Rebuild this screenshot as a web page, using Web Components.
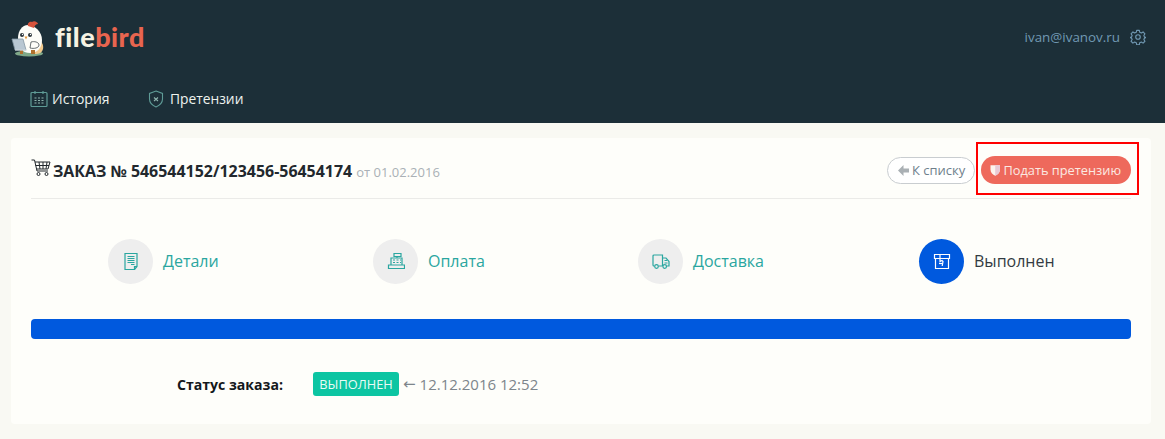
<!DOCTYPE html>
<html lang="ru">
<head>
<meta charset="utf-8">
<title>Заказ</title>
<style>
html,body{margin:0;padding:0;background:#f9f9f3;font-family:"Open Sans","Noto Sans",sans-serif;}
</style>
</head>
<body>
<app-header email="ivan@ivanov.ru"></app-header>
<order-card number="546544152/123456-56454174" date="01.02.2016">
  <order-step label="Детали" icon="doc"></order-step>
  <order-step label="Оплата" icon="till"></order-step>
  <order-step label="Доставка" icon="truck"></order-step>
  <order-step label="Выполнен" icon="box" active></order-step>
</order-card>

<script>
// Site header with logo, user and nav
const headerTpl = document.createElement('template');
headerTpl.innerHTML = `
<style>
:host{display:block;height:123px;background:#1c2f38;box-sizing:border-box;}
.top{display:flex;align-items:center;justify-content:space-between;height:76px;padding:0 19px 0 10px;}
.logo{display:flex;align-items:center;gap:9px;}
.word{font:900 27px/30px Lato,"Open Sans",sans-serif;letter-spacing:.5px;color:#f6f3e3;margin-top:-2px;}
.word b{color:#e8654f;font-weight:900;}
.user{display:flex;align-items:center;gap:10px;color:#7199b3;font-size:13.4px;margin-top:-3px;}
nav{display:flex;padding:13px 0 0 30px;}
nav a{display:flex;align-items:center;gap:4px;color:#eef3ee;font-size:13.8px;line-height:20px;}
nav a:first-child{width:118px;font-size:14px;}
</style>
<div class="top">
  <div class="logo">
    <svg width="36" height="40" viewBox="0 0 36 40">
      <ellipse cx="19" cy="35.500" rx="14" ry="3" fill="#7fa888"/>
      <path d="M26 21c5 1 8 5 7 10-1 4-4 5-8 5z" fill="#f1c98c"/>
      <path d="M18 7c-6 0-10 6-10 13 0 9 4 15 12 15 8 0 12-6 12-13 0-8-7-15-14-15z" fill="#fdfdf8"/>
      <path d="M18 8c-1-3 2-5 4-4 2-2 6 0 6 2-2 0-3 1-4 4z" fill="#d6533c"/>
      <circle cx="12" cy="17" r="2" fill="#2b3438"/>
      <circle cx="20" cy="17" r="2" fill="#2b3438"/>
      <circle cx="12.500" cy="16.500" r=".7" fill="#fff"/>
      <circle cx="20.500" cy="16.500" r=".7" fill="#fff"/>
      <path d="M14.500 18.500h3l-1.500 3z" fill="#e39a3d"/>
      <path d="M10 32h3v4h-3zM21 32h4v4h-4z" fill="#b0712d"/>
      <path d="M2 21h11l3 11H5z" fill="#b8c7d2" stroke="#8497a3" stroke-width=".8"/>
      <path d="M5 32h12" stroke="#dfe6ea" stroke-width="1"/>
      <path d="M21 24c3-1 8 0 8 3 0 3-5 4-9 3z" fill="#fdfdf8" stroke="#2b3438" stroke-width=".7"/>
    </svg>
    <span class="word">file<b>bird</b></span>
  </div>
  <div class="user">
    <span id="email"></span>
    <svg width="16" height="16" viewBox="0 0 24 24" fill="none" stroke="#7199b3" stroke-width="1.700" stroke-linejoin="round">
      <circle cx="12" cy="12" r="3.400"/>
      <path d="M10 2h4l.6 3 2.400 1 2.600-1.600 2.800 2.800-1.600 2.600 1 2.400 3 .6v0l-3 .6-1 2.400 1.600 2.600-2.800 2.800-2.600-1.600-2.400 1-.6 3h-4l-.6-3-2.400-1-2.600 1.600-2.800-2.800 1.600-2.600-1-2.400-3-.6v-0l3-.6 1-2.400-1.600-2.600 2.800-2.800 2.600 1.600 2.400-1z"/>
    </svg>
  </div>
</div>
<nav>
  <a>
    <svg width="18" height="18" viewBox="0 0 18 18" fill="none" stroke="#5f9c97" stroke-width="1.200">
      <rect x="1" y="2.500" width="16" height="14" rx="1"/>
      <path d="M5 1v3M13 1v3"/>
      <path d="M4.500 8h2M8 8h2M11.500 8h2M4.500 10.500h2M8 10.500h2M11.500 10.500h2M4.500 13h2M8 13h2M11.500 13h2" stroke="#8fb5ae"/>
    </svg>
    История
  </a>
  <a>
    <svg width="16" height="18" viewBox="0 0 16 18" fill="none" stroke="#5f9c97" stroke-width="1.100" style="margin-right:2px">
      <path d="M8 1l6.500 2.500V9c0 4-3 6.500-6.500 8C4.500 15.500 1.500 13 1.500 9V3.500z"/>
      <path d="M6 7.500l4 3.500M10 7.500l-4 3.500" stroke="#8fb5ae"/>
    </svg>
    Претензии
  </a>
</nav>`;
class AppHeader extends HTMLElement {
  constructor() {
    super();
    this.attachShadow({ mode: 'open' });
    this.shadowRoot.appendChild(headerTpl.content.cloneNode(true));
    this.shadowRoot.querySelector('#email').textContent = this.getAttribute('email');
  }
}
customElements.define('app-header', AppHeader);

// One step of the order progress
const stepIcons = {
  doc: `<path d="M3 .5h12v13l-2.500 3H3z"/><path d="M5.500 3.500h7M5.500 5.500h7M5.500 7.500h7M5.500 9.500h7M9 11.500h3.500"/><path d="M15 13.500h-2.500v3"/>`,
  till: `<path d="M7 .5h7v3H7zM4 5h11v7H4zM1.500 12h16v3.500h-16z"/><path d="M10 3.500V5M6 7h2M9.500 7h2M13 7h1M6 9.500h2M9.500 9.500h2M13 9.500h1" />`,
  truck: `<path d="M10.500 13H6.500M2.500 13H2a1 1 0 0 1-1-1V3a1 1 0 0 1 1-1h8.500v11"/><path d="M10.500 5H14l3 3.500V13h-2.500"/><circle cx="4.500" cy="13.500" r="1.800"/><circle cx="12.700" cy="13.500" r="1.800"/><path d="M12.500 7.500h2.500M12.500 10h3"/>`,
  box: `<path d="M1.500 1.500h15v4h-15zM2.500 5.500v10h13v-10"/><path d="M7 1.500v7l2-1 1 1-.8 4.500"/><path d="M6 10.500h3"/>`
};
const stepTpl = document.createElement('template');
stepTpl.innerHTML = `
<style>
:host{display:flex;align-items:center;gap:10px;color:#2aa6a0;font-size:16px;}
.dot{width:45px;height:45px;border-radius:50%;background:#eeeeee;display:flex;align-items:center;justify-content:center;}
svg{fill:none;stroke:#2aa6a0;stroke-width:1.200;}
#label{margin-top:-2px;}
:host([active]){color:#333b42;}
:host([active]) .dot{background:#0059de;}
:host([active]) svg{stroke:#ffffff;}
</style>
<div class="dot"><svg width="18" height="17" viewBox="0 0 18 17"></svg></div>
<span id="label"></span>`;
class OrderStep extends HTMLElement {
  constructor() {
    super();
    this.attachShadow({ mode: 'open' });
    this.shadowRoot.appendChild(stepTpl.content.cloneNode(true));
    this.shadowRoot.querySelector('#label').textContent = this.getAttribute('label');
    this.shadowRoot.querySelector('svg').innerHTML = stepIcons[this.getAttribute('icon')];
  }
}
customElements.define('order-step', OrderStep);

// Pill buttons in the title row
const btnTpl = document.createElement('template');
btnTpl.innerHTML = `
<style>
:host{display:inline-flex;align-items:center;box-sizing:border-box;height:28px;border-radius:14px;font-size:12.800px;white-space:nowrap;}
:host([kind=plain]){height:27px;width:88px;padding:0 8px 0 10px;gap:3px;background:#fff;border:1px solid #c9cdd0;color:#6f7f8c;font-size:13px;}
:host([kind=danger]){width:150px;padding:0 10px 0 9px;gap:3px;background:#ee695c;color:#fbe9e2;}
</style>
<slot name="icon"></slot><slot></slot>`;
class PillButton extends HTMLElement {
  constructor() {
    super();
    this.attachShadow({ mode: 'open' });
    this.shadowRoot.appendChild(btnTpl.content.cloneNode(true));
  }
}
customElements.define('pill-button', PillButton);

// Main card
const cardTpl = document.createElement('template');
cardTpl.innerHTML = `
<style>
:host{display:block;box-sizing:border-box;margin:15px 14px 0 11px;height:286px;padding:0 20px;background:#fefefa;border-radius:4px;position:relative;}
.head{display:flex;align-items:center;justify-content:space-between;height:60px;border-bottom:1px solid #ebebe8;}
h1{display:flex;align-items:center;margin:0;font-size:15.950px;font-weight:700;color:#22282d;line-height:22px;padding-top:5px;}
h1 svg{margin:-6px 2px 0 0;}
h1 small{font-size:13px;font-weight:400;color:#aab1b6;margin:2px 0 0 4px;}
.btns{display:flex;align-items:center;gap:6px;padding-top:4px;}
.mark{position:absolute;left:965px;top:4px;width:163px;height:53px;box-sizing:border-box;border:2px solid #ff0000;}
.steps{display:grid;grid-template-columns:265px 265px 281px 1fr;padding:40px 0 0 77px;}
.bar{height:20px;margin-top:35px;background:#0059de;border-radius:4px;}
.status{display:flex;align-items:center;margin-top:33px;padding-left:146px;font-size:15px;color:#7d858b;}
.status b{width:136px;color:#14181b;font-weight:700;font-size:14.100px;}
.tag{background:#0cc5a2;color:#eafbf6;border-radius:3px;height:24px;line-height:24px;width:86px;box-sizing:border-box;text-align:center;font-size:12.800px;margin-right:4px;}
.arrow{font-family:"DejaVu Sans",sans-serif;margin-right:4px;}
</style>
<div class="head">
  <h1>
    <svg width="20" height="18" viewBox="0 0 20 18" fill="none" stroke="#22282d" stroke-width="1">
      <path d="M.5 1h3l2.500 11h11"/>
      <path d="M4 3h15l-2 7H5.600"/>
      <path d="M8 3l1 7M12 3v7M16 3l-1 7M4.500 6.500h13.500"/>
      <circle cx="7.500" cy="15" r="1.500"/><circle cx="15.500" cy="15" r="1.500"/>
    </svg>
    ЗАКАЗ № <span id="num" style="margin-left:4px"></span><small>от <span id="date"></span></small>
  </h1>
  <div class="btns">
    <pill-button kind="plain">
      <svg slot="icon" width="11" height="11" viewBox="0 0 11 11"><path d="M5.500 0v3.500H11v4H5.500V11L0 5.500z" fill="#aab0b4"/></svg>
      К списку
    </pill-button>
    <pill-button kind="danger">
      <svg slot="icon" width="11" height="12" viewBox="0 0 11 12"><path d="M.5 1h10v4.500C10.500 9 8 11 5.500 12 3 11 .5 9 .5 5.500z" fill="#fdf3ee"/><path d="M5.500 1h5v4.500C10.500 9 8 11 5.500 12z" fill="#e9c9d6"/></svg>
      Подать претензию
    </pill-button>
  </div>
</div>
<div class="mark"></div>
<div class="steps"><slot></slot></div>
<div class="bar"></div>
<div class="status"><b>Статус заказа:</b><span class="tag">ВЫПОЛНЕН</span><span class="arrow">←</span>12.12.2016 12:52</div>`;
class OrderCard extends HTMLElement {
  constructor() {
    super();
    this.attachShadow({ mode: 'open' });
    this.shadowRoot.appendChild(cardTpl.content.cloneNode(true));
    this.shadowRoot.querySelector('#num').textContent = this.getAttribute('number');
    this.shadowRoot.querySelector('#date').textContent = this.getAttribute('date');
  }
}
customElements.define('order-card', OrderCard);
</script>
</body>
</html>
